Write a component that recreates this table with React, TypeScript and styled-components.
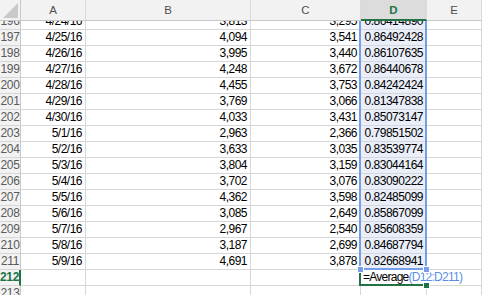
import React from "react";
import styled, { createGlobalStyle } from "styled-components";

const Global = createGlobalStyle`
  html, body { margin: 0; padding: 0; background: #fff; }
  body { width: 482px; height: 295px; overflow: hidden; }
`;

const COLS = "21px 65px 165px 110px 66px 1fr";
const GRID = "#d6d6d6";
const GREEN = "#217346";
const BLUE = "#779ee9";

const Sheet = styled.div`
  position: relative;
  width: 482px;
  height: 295px;
  overflow: hidden;
  font-family: "Liberation Sans", Arial, sans-serif;
  font-size: 12px;
  letter-spacing: -0.5px;
  color: #000;
`;

const Row = styled.div<{ $h: number }>`
  display: grid;
  grid-template-columns: ${COLS};
  height: ${(p) => p.$h}px;
`;

const HeadCell = styled.div<{ $active?: boolean }>`
  display: flex;
  align-items: center;
  justify-content: center;
  background: ${(p) => (p.$active ? "#dcdcdc" : "#f2f2f2")};
  border-right: 1px solid #dadada;
  border-bottom: ${(p) => (p.$active ? `2px solid ${GREEN}` : "1px solid #c8c8c8")};
  color: ${(p) => (p.$active ? GREEN : "#505050")};
  font-weight: ${(p) => (p.$active ? 700 : 400)};
  font-size: 11.5px;
  letter-spacing: 0;
  padding-top: ${(p) => (p.$active ? "1px" : "0")};
`;

const Corner = styled.div`
  background: #f2f2f2;
  border-right: 1px solid #c8c8c8;
  border-bottom: 1px solid #c8c8c8;
  display: flex;
  align-items: flex-end;
  justify-content: flex-end;
  padding: 0 2px 2px 0;
`;

const RowHead = styled.div<{ $active?: boolean }>`
  display: flex;
  align-items: flex-end;
  justify-content: center;
  overflow: hidden;
  background: #f2f2f2;
  border-right: ${(p) => (p.$active ? `2px solid ${GREEN}` : "1px solid #c8c8c8")};
  border-bottom: 1px solid ${GRID};
  color: ${(p) => (p.$active ? GREEN : "#595959")};
  font-weight: ${(p) => (p.$active ? 700 : 400)};
  padding-bottom: 1px;
  letter-spacing: -0.4px;
`;

const Cell = styled.div<{ $sel?: boolean }>`
  display: flex;
  align-items: flex-end;
  justify-content: flex-end;
  overflow: hidden;
  white-space: nowrap;
  padding: 0 3px 1px 3px;
  background: ${(p) => (p.$sel ? "#e9eef9" : "#fff")};
  border-right: 1px solid ${GRID};
  border-bottom: 1px solid ${GRID};
`;

const Selection = styled.div`
  position: absolute;
  left: 359px;
  top: 21px;
  width: 64px;
  height: 247px;
  border: 2px solid ${BLUE};
  border-top: none;
  pointer-events: none;
`;

const Handle = styled.div<{ $x: number; $y: number; $c: string }>`
  position: absolute;
  left: ${(p) => p.$x}px;
  top: ${(p) => p.$y}px;
  width: 5px;
  height: 5px;
  background: ${(p) => p.$c};
  border: 1px solid #fff;
  box-sizing: content-box;
`;

const Editor = styled.div`
  position: absolute;
  left: 359px;
  top: 270px;
  width: 108px;
  height: 14px;
  background: #fff;
  border-left: 2px solid ${GREEN};
  display: flex;
  align-items: flex-end;
  padding-left: 2px;
  box-sizing: border-box;
  white-space: nowrap;
  line-height: 13px;
  letter-spacing: -0.75px;
`;

const Ref = styled.span`
  color: #5b8ee6;
`;

const GreenLine = styled.div`
  position: absolute;
  left: 359px;
  top: 284px;
  width: 67px;
  height: 2px;
  background: ${GREEN};
`;

type R = [string, string, string, string, string];
const rows: R[] = [
  ["196", "4/24/16", "3,813", "3,295", "0.86414890"],
  ["197", "4/25/16", "4,094", "3,541", "0.86492428"],
  ["198", "4/26/16", "3,995", "3,440", "0.86107635"],
  ["199", "4/27/16", "4,248", "3,672", "0.86440678"],
  ["200", "4/28/16", "4,455", "3,753", "0.84242424"],
  ["201", "4/29/16", "3,769", "3,066", "0.81347838"],
  ["202", "4/30/16", "4,033", "3,431", "0.85073147"],
  ["203", "5/1/16", "2,963", "2,366", "0.79851502"],
  ["204", "5/2/16", "3,633", "3,035", "0.83539774"],
  ["205", "5/3/16", "3,804", "3,159", "0.83044164"],
  ["206", "5/4/16", "3,702", "3,076", "0.83090222"],
  ["207", "5/5/16", "4,362", "3,598", "0.82485099"],
  ["208", "5/6/16", "3,085", "2,649", "0.85867099"],
  ["209", "5/7/16", "2,967", "2,540", "0.85608359"],
  ["210", "5/8/16", "3,187", "2,699", "0.84687794"],
  ["211", "5/9/16", "4,691", "3,878", "0.82668941"],
];

export default function App() {
  return (
    <>
      <Global />
      <Sheet>
        <Row $h={21}>
          <Corner>
            <svg width="15" height="15" viewBox="0 0 15 15">
              <polygon points="15,0 15,15 0,15" fill="#c9c9c9" />
            </svg>
          </Corner>
          <HeadCell>A</HeadCell>
          <HeadCell>B</HeadCell>
          <HeadCell>C</HeadCell>
          <HeadCell $active>D</HeadCell>
          <HeadCell>E</HeadCell>
        </Row>
        {rows.map((r, i) => (
          <Row key={r[0]} $h={i === 0 ? 9 : 16}>
            <RowHead>{r[0]}</RowHead>
            <Cell>{r[1]}</Cell>
            <Cell>{r[2]}</Cell>
            <Cell>{r[3]}</Cell>
            <Cell $sel>{r[4]}</Cell>
            <Cell />
          </Row>
        ))}
        <Row $h={16}>
          <RowHead $active>212</RowHead>
          <Cell />
          <Cell />
          <Cell />
          <Cell />
          <Cell />
        </Row>
        <Row $h={16}>
          <RowHead>213</RowHead>
          <Cell />
          <Cell />
          <Cell />
          <Cell />
          <Cell />
        </Row>
        <Selection />
        <Editor>
          =Average<Ref>(D12:D211)</Ref>
        </Editor>
        <GreenLine />
        <Handle $x={357} $y={266} $c={BLUE} />
        <Handle $x={423} $y={266} $c={BLUE} />
        <Handle $x={423} $y={282} $c={GREEN} />
      </Sheet>
    </>
  );
}
